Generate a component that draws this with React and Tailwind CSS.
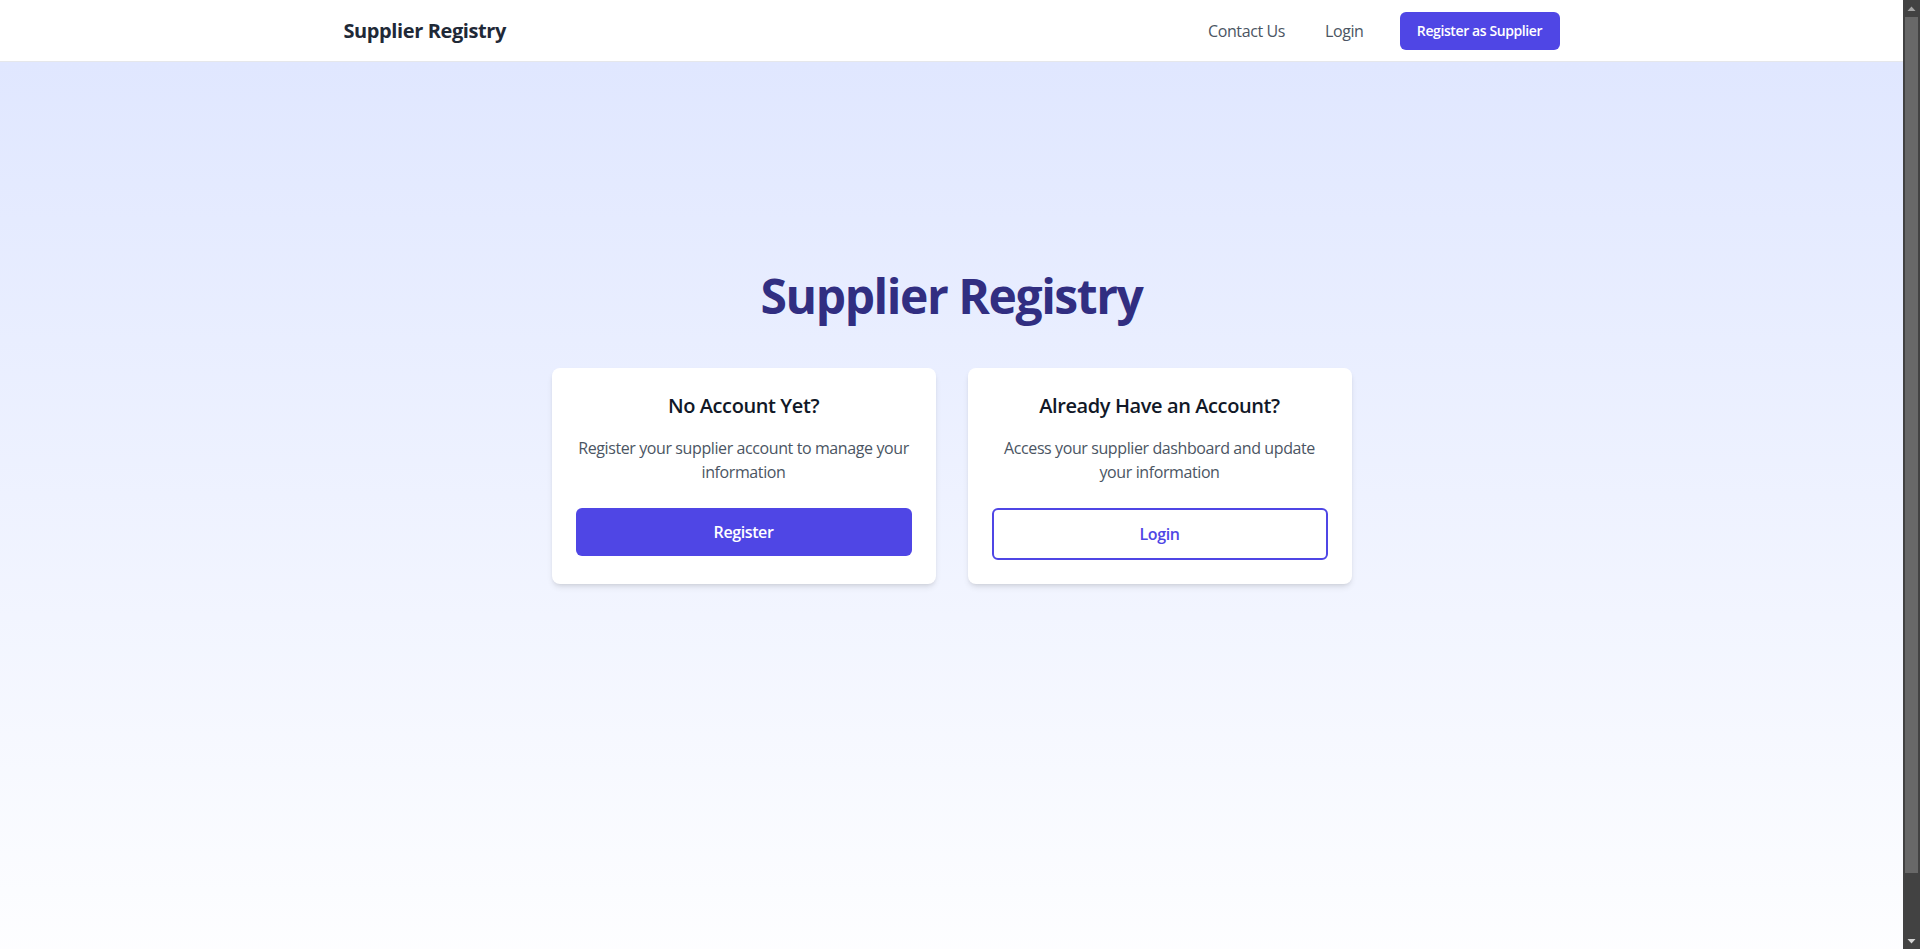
function ScrollArrow({ up }) {
  return (
    <div className="h-[17px] flex items-center justify-center bg-[#424242]">
      <svg width="9" height="6" viewBox="0 0 9 6">
        {up ? (
          <polygon points="4.5,0.5 8.5,5 0.5,5" fill="#a3a3a3" />
        ) : (
          <polygon points="0.5,1 8.5,1 4.5,5.5" fill="#d4d4d4" />
        )}
      </svg>
    </div>
  );
}

export default function App() {
  return (
    <div className="h-screen flex overflow-hidden font-['Open_Sans',sans-serif] tracking-tight">
      <div className="flex-1 min-w-0 overflow-hidden">
        <header className="bg-white border-b border-[#e5e7eb]">
          <div className="max-w-7xl mx-auto px-8 h-[61px] flex items-center justify-between">
            <div className="text-xl font-bold text-[#1f2937]">Supplier Registry</div>
            <nav className="flex items-center">
              <a href="#" className="text-[#4b5563] px-3 py-2">Contact Us</a>
              <a href="#" className="text-[#4b5563] px-3 py-2 ml-4">Login</a>
              <a href="#" className="ml-6 bg-[#4f46e5] text-white text-sm font-semibold w-[160px] justify-center h-[38px] flex items-center rounded-md">
                Register as Supplier
              </a>
            </nav>
          </div>
        </header>
        <main className="min-h-screen bg-linear-to-b from-[#e0e7ff] to-white pt-[210px]">
          <h1 className="text-5xl font-bold text-[#312e81] text-center mb-12 tracking-[-0.03em]">Supplier Registry</h1>
          <div className="w-[800px] mx-auto grid grid-cols-2 gap-8">
            <div className="bg-white rounded-lg shadow-md p-6 text-center">
              <h2 className="text-xl font-semibold text-[#111827] mb-4">No Account Yet?</h2>
              <p className="text-[#4b5563] mb-6">Register your supplier account to manage your information</p>
              <button className="w-full bg-[#4f46e5] text-white font-semibold py-3 rounded-md">Register</button>
            </div>
            <div className="bg-white rounded-lg shadow-md p-6 text-center">
              <h2 className="text-xl font-semibold text-[#111827] mb-4">Already Have an Account?</h2>
              <p className="text-[#4b5563] mb-6">Access your supplier dashboard and update your information</p>
              <button className="w-full bg-white text-[#4f46e5] border-2 border-[#4f46e5] font-semibold py-3 rounded-md">Login</button>
            </div>
          </div>
        </main>
      </div>
      <div className="w-[17px] shrink-0 flex flex-col bg-[#424242]">
        <ScrollArrow up />
        <div className="flex-1 px-[2px]">
          <div className="h-[856px] bg-[#686868]" />
        </div>
        <ScrollArrow />
      </div>
    </div>
  );
}
